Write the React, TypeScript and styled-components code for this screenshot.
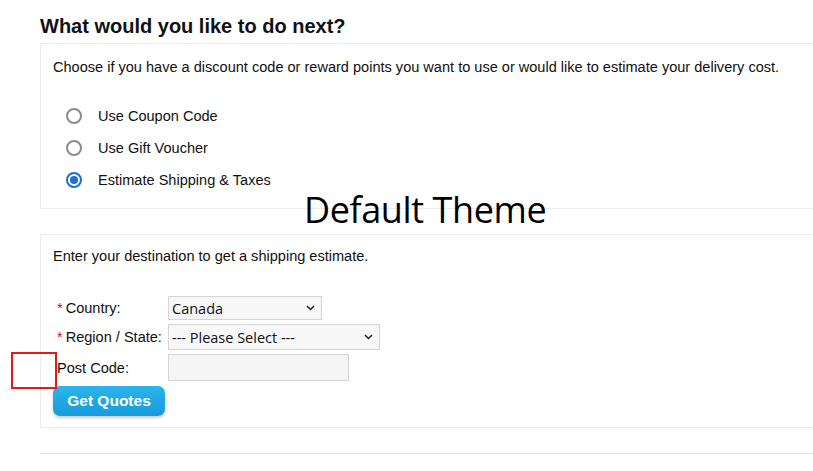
import React from "react";
import styled, { createGlobalStyle } from "styled-components";

const Global = createGlobalStyle`
  html, body { margin: 0; padding: 0; background: #fff; }
  body { font-family: "Liberation Sans", Arial, sans-serif; color: #111; }
`;

const Page = styled.div`
  position: relative;
  width: 813px;
  height: 471px;
  overflow: hidden;
  padding: 14px 0 0 40px;
  box-sizing: border-box;
`;

const Heading = styled.h2`
  margin: 0 0 5px 0;
  font-size: 20px;
  font-weight: bold;
  line-height: 24px;
  color: #111;
`;

const Panel = styled.div<{ $h: number; $pt: number }>`
  width: 800px;
  height: ${(p) => p.$h}px;
  box-sizing: border-box;
  border: 1px solid #ececec;
  padding: ${(p) => p.$pt}px 12px 0 12px;
  margin-bottom: 25px;
`;

const Intro = styled.p`
  margin: 0;
  font-size: 14.55px;
  line-height: 18px;
`;

const RadioList = styled.div`
  display: flex;
  flex-direction: column;
  gap: 14px;
  margin: 31px 0 0 13px;
`;

const RadioRow = styled.label`
  display: flex;
  align-items: center;
  gap: 16px;
  font-size: 14.55px;
  line-height: 18px;
`;

const RadioDot = styled.span<{ $on?: boolean }>`
  width: 16px;
  height: 16px;
  border-radius: 50%;
  box-sizing: border-box;
  border: ${(p) => (p.$on ? "2px solid #1a6fdc" : "2px solid #8a8a8a")};
  display: flex;
  align-items: center;
  justify-content: center;
  &::after {
    content: "";
    display: ${(p) => (p.$on ? "block" : "none")};
    width: 8px;
    height: 8px;
    border-radius: 50%;
    background: #1a6fdc;
  }
`;

const Form = styled.div`
  display: grid;
  grid-template-columns: 111px auto;
  row-gap: 4px;
  margin: 31px 0 0 4px;
  align-items: center;
  justify-items: start;
`;

const Label = styled.span`
  font-size: 14.55px;
  line-height: 18px;
`;

const Req = styled.span`
  color: #d11;
  margin-right: 3px;
`;

const Select = styled.div<{ $w: number; $h: number }>`
  width: ${(p) => p.$w}px;
  height: ${(p) => p.$h}px;
  box-sizing: border-box;
  border: 1px solid #d6d6d6;
  background: #f7f7f7;
  display: flex;
  align-items: center;
  justify-content: space-between;
  padding: 0 6px 0 3px;
  font-family: "Open Sans", "Noto Sans", sans-serif;
  font-size: 14.5px;
  color: #111;
`;

const Chevron = styled.svg`
  width: 9px;
  height: 6px;
`;

const Input = styled.div`
  width: 181px;
  height: 27px;
  box-sizing: border-box;
  border: 1px solid #d6d6d6;
  background: #f5f5f5;
`;

const Button = styled.button`
  display: block;
  margin: 5px 0 0 0;
  width: 112px;
  height: 30px;
  border: none;
  border-radius: 7px;
  background: linear-gradient(#2cb5ea, #169bdc);
  box-shadow: 0 2px 3px rgba(0, 0, 0, 0.2);
  color: #fff;
  font-family: "Liberation Sans", Arial, sans-serif;
  font-weight: bold;
  font-size: 15.5px;
  padding: 0;
`;

const BottomRule = styled.div`
  width: 800px;
  margin-top: 3px;
  border-top: 1px solid #e6e6e6;
`;

const Stamp = styled.div`
  position: absolute;
  left: 304px;
  top: 185px;
  font-family: "Open Sans", "Noto Sans", sans-serif;
  font-size: 36px;
  letter-spacing: -0.4px;
  line-height: 50px;
  color: #000;
`;

const RedBox = styled.div`
  position: absolute;
  left: 11px;
  top: 352px;
  width: 46px;
  height: 37px;
  box-sizing: border-box;
  border: 2px solid #e01b1b;
`;

const Arrow = () => (
  <Chevron viewBox="0 0 9 6">
    <path d="M1 1 L4.5 4.5 L8 1" fill="none" stroke="#222" strokeWidth="1.5" />
  </Chevron>
);

export default function App() {
  return (
    <>
      <Global />
      <Page>
        <Heading>What would you like to do next?</Heading>
        <Panel $h={166} $pt={14}>
          <Intro>
            Choose if you have a discount code or reward points you want to use or would like to estimate your delivery cost.
          </Intro>
          <RadioList>
            <RadioRow>
              <RadioDot />
              Use Coupon Code
            </RadioRow>
            <RadioRow>
              <RadioDot />
              Use Gift Voucher
            </RadioRow>
            <RadioRow>
              <RadioDot $on />
              Estimate Shipping &amp; Taxes
            </RadioRow>
          </RadioList>
        </Panel>
        <Panel $h={194} $pt={12}>
          <Intro>Enter your destination to get a shipping estimate.</Intro>
          <Form>
            <Label>
              <Req>*</Req>Country:
            </Label>
            <Select $w={154} $h={24}>
              Canada
              <Arrow />
            </Select>
            <Label>
              <Req>*</Req>Region / State:
            </Label>
            <Select $w={212} $h={26}>
              --- Please Select ---
              <Arrow />
            </Select>
            <Label>Post Code:</Label>
            <Input />
          </Form>
          <Button>Get Quotes</Button>
        </Panel>
        <BottomRule />
        <Stamp>Default Theme</Stamp>
        <RedBox />
      </Page>
    </>
  );
}
